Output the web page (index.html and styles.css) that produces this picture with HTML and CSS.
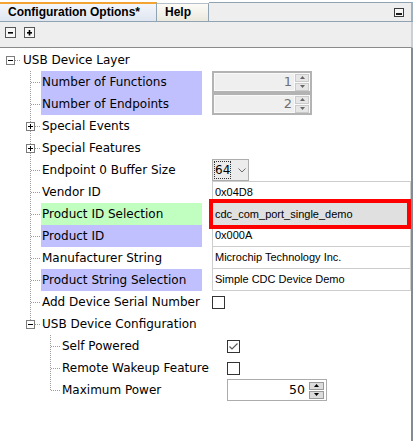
FILE: index.html
```html
<!DOCTYPE html>
<html>
<head>
<meta charset="utf-8">
<link rel="stylesheet" href="styles.css">
</head>
<body>
<div class="panel">
  <div class="tabbar">
    <div class="tab tab-active">Configuration Options*</div>
    <div class="tab tab-help">Help</div>
    <div class="tab-fill">
      <svg class="minbtn" width="10" height="9" viewBox="0 0 10 9"><rect x="0.5" y="0.5" width="9" height="8" fill="#f6f6f6" stroke="#3a3a3a"/><rect x="2" y="5" width="6" height="2" fill="#1e1e1e"/></svg>
    </div>
  </div>
  <div class="toolbar">
    <svg class="tbtn" width="11" height="11" viewBox="0 0 11 11"><rect x="0.5" y="0.5" width="10" height="10" fill="#f7f7f7" stroke="#555"/><rect x="3" y="5" width="5" height="1.6" fill="#000"/></svg>
    <svg class="tbtn" width="11" height="11" viewBox="0 0 11 11"><rect x="0.5" y="0.5" width="10" height="10" fill="#f7f7f7" stroke="#555"/><rect x="3" y="5" width="5" height="1.6" fill="#000"/><rect x="4.7" y="3" width="1.6" height="5.5" fill="#000"/></svg>
  </div>
  <div class="tree">
    <div class="row">
      <div class="g root-g"><svg class="exp" width="9" height="9" viewBox="0 0 9 9"><rect x="0.5" y="0.5" width="8" height="8" fill="#fff" stroke="#7c7c7c"/><rect x="2" y="4" width="5" height="1" fill="#000"/></svg></div>
      <div class="lbl lbl-root">USB Device Layer</div>
    </div>
    <div class="row">
      <div class="g"></div><div class="g tee"></div>
      <div class="lbl hl-blue">Number of Functions</div>
      <div class="val">
        <div class="spin spin-dis"><div class="spin-num">1</div><div class="spin-btns"><div class="sbtn"><svg width="5" height="3" viewBox="0 0 5 3"><path d="M2.5 0L5 3H0z" fill="#666"/></svg></div><div class="sbtn"><svg width="5" height="3" viewBox="0 0 5 3"><path d="M0 0H5L2.5 3z" fill="#666"/></svg></div></div></div>
      </div>
    </div>
    <div class="row">
      <div class="g"></div><div class="g tee"></div>
      <div class="lbl hl-blue">Number of Endpoints</div>
      <div class="val">
        <div class="spin spin-dis"><div class="spin-num">2</div><div class="spin-btns"><div class="sbtn"><svg width="5" height="3" viewBox="0 0 5 3"><path d="M2.5 0L5 3H0z" fill="#666"/></svg></div><div class="sbtn"><svg width="5" height="3" viewBox="0 0 5 3"><path d="M0 0H5L2.5 3z" fill="#666"/></svg></div></div></div>
      </div>
    </div>
    <div class="row">
      <div class="g"></div><div class="g tee"><svg class="exp" width="9" height="9" viewBox="0 0 9 9"><rect x="0.5" y="0.5" width="8" height="8" fill="#fff" stroke="#7c7c7c"/><rect x="2" y="4" width="5" height="1" fill="#000"/><rect x="4" y="2" width="1" height="5" fill="#000"/></svg></div>
      <div class="lbl">Special Events</div>
    </div>
    <div class="row">
      <div class="g"></div><div class="g tee"><svg class="exp" width="9" height="9" viewBox="0 0 9 9"><rect x="0.5" y="0.5" width="8" height="8" fill="#fff" stroke="#7c7c7c"/><rect x="2" y="4" width="5" height="1" fill="#000"/><rect x="4" y="2" width="1" height="5" fill="#000"/></svg></div>
      <div class="lbl">Special Features</div>
    </div>
    <div class="row">
      <div class="g"></div><div class="g tee"></div>
      <div class="lbl">Endpoint 0 Buffer Size</div>
      <div class="val">
        <div class="combo"><span class="combo-txt">64</span><svg class="chev" width="8" height="5" viewBox="0 0 8 5"><path d="M0.5 0.5L4 4L7.5 0.5" fill="none" stroke="#6a6a6a"/></svg></div>
      </div>
    </div>
    <div class="row">
      <div class="g"></div><div class="g tee"></div>
      <div class="lbl">Vendor ID</div>
      <div class="val"><div class="field field-first">0x04D8</div></div>
    </div>
    <div class="row">
      <div class="g"></div><div class="g tee"></div>
      <div class="lbl hl-green">Product ID Selection</div>
      <div class="val"><div class="field field-sel">cdc_com_port_single_demo</div></div>
    </div>
    <div class="row">
      <div class="g"></div><div class="g tee"></div>
      <div class="lbl hl-blue">Product ID</div>
      <div class="val"><div class="field">0x000A</div></div>
    </div>
    <div class="row">
      <div class="g"></div><div class="g tee"></div>
      <div class="lbl">Manufacturer String</div>
      <div class="val"><div class="field">Microchip Technology Inc.</div></div>
    </div>
    <div class="row">
      <div class="g"></div><div class="g tee"></div>
      <div class="lbl hl-blue">Product String Selection</div>
      <div class="val"><div class="field">Simple CDC Device Demo</div></div>
    </div>
    <div class="row">
      <div class="g"></div><div class="g tee"></div>
      <div class="lbl">Add Device Serial Number</div>
      <div class="val"><div class="chk"></div></div>
    </div>
    <div class="row">
      <div class="g"></div><div class="g ell"><svg class="exp" width="9" height="9" viewBox="0 0 9 9"><rect x="0.5" y="0.5" width="8" height="8" fill="#fff" stroke="#7c7c7c"/><rect x="2" y="4" width="5" height="1" fill="#000"/></svg></div>
      <div class="lbl">USB Device Configuration</div>
    </div>
    <div class="row">
      <div class="g"></div><div class="g"></div><div class="g tee"></div>
      <div class="lbl lbl-2">Self Powered</div>
      <div class="val val-2"><div class="chk"><svg width="11" height="11" viewBox="0 0 11 11"><path d="M1.5 5.5L4 8L9.5 2.5" fill="none" stroke="#5a5a5a" stroke-width="1.2"/></svg></div></div>
    </div>
    <div class="row">
      <div class="g"></div><div class="g"></div><div class="g tee"></div>
      <div class="lbl lbl-2">Remote Wakeup Feature</div>
      <div class="val val-2"><div class="chk"></div></div>
    </div>
    <div class="row">
      <div class="g"></div><div class="g"></div><div class="g ell"></div>
      <div class="lbl lbl-2">Maximum Power</div>
      <div class="val val-2">
        <div class="spin spin-on"><div class="spin-num">50</div><div class="spin-btns"><div class="sbtn"><svg width="5" height="3" viewBox="0 0 5 3"><path d="M2.5 0L5 3H0z" fill="#000"/></svg></div><div class="sbtn"><svg width="5" height="3" viewBox="0 0 5 3"><path d="M0 0H5L2.5 3z" fill="#000"/></svg></div></div></div>
      </div>
    </div>
  </div>
</div>
</body>
</html>
```

FILE: styles.css
```css
* { box-sizing: border-box; }
html, body { margin: 0; padding: 0; background: #fff; }
body {
  width: 413px;
  height: 441px;
  overflow: hidden;
  font-family: "DejaVu Sans", sans-serif;
  color: #000;
}
.panel {
  width: 413px;
  height: 441px;
  display: flex;
  flex-direction: column;
}

/* tab bar */
.tabbar {
  height: 22px;
  padding-top: 2px;
  display: flex;
  border-bottom: 1px solid #8fa3b3;
  background: #fff;
}
.tab {
  height: 19px;
  font: bold 12px "Liberation Sans", sans-serif;
  line-height: 16px;
  color: #000;
  white-space: nowrap;
}
.tab-active {
  width: 157px;
  border-top: 2px solid #f4a433;
  border-right: 1px solid #8fa3b3;
  background: linear-gradient(#f3f6fb, #dfe6f1);
  padding-left: 8px;
}
.tab-help {
  width: 52px;
  margin-top: 1px;
  height: 18px;
  border-top: 1px solid #b5c0ca;
  border-right: 1px solid #8fa3b3;
  background: linear-gradient(#fcfbf6, #ebe8de);
  padding-left: 8px;
  line-height: 17px;
}
.tab-fill {
  flex: 1;
  border-top: 1px solid #8fa3b3;
  border-right: 2px solid #9fb0bf;
  background: #eeeeee;
  display: flex;
  justify-content: flex-end;
  align-items: center;
  padding-right: 7px;
}
.minbtn { display: block; }

/* toolbar */
.toolbar {
  height: 26px;
  background: #eeeeee;
  border-bottom: 1px solid #8a8a8a;
  border-right: 2px solid #c9cfd5;
  display: flex;
  align-items: flex-start;
  padding: 5px 0 0 5px;
  gap: 8px;
}
.tbtn { display: block; }

/* tree */
.tree {
  flex: 1;
  padding-top: 1px;
  border-right: 2px solid #838c95;
  background: #fff;
}
.row {
  display: flex;
  height: 22px;
  align-items: flex-start;
}
.g {
  flex: none;
  width: 20px;
  height: 22px;
}
.tee, .ell, .root-g {
  background-repeat: no-repeat;
}
.tee {
  background-image:
    repeating-linear-gradient(to bottom, #9c9c9c 0 1px, transparent 1px 2px),
    repeating-linear-gradient(to right, #9c9c9c 0 1px, transparent 1px 2px);
  background-size: 1px 22px, 9px 1px;
  background-position: 10px 0, 11px 11px;
}
.ell {
  background-image:
    repeating-linear-gradient(to bottom, #9c9c9c 0 1px, transparent 1px 2px),
    repeating-linear-gradient(to right, #9c9c9c 0 1px, transparent 1px 2px);
  background-size: 1px 11px, 9px 1px;
  background-position: 10px 0, 11px 11px;
}
.root-g {
  background-image: repeating-linear-gradient(to right, #9c9c9c 0 1px, transparent 1px 2px);
  background-size: 6px 1px;
  background-position: 15px 11px;
}
.exp {
  display: block;
  margin: 7px 0 0 6px;
}
.lbl {
  flex: none;
  width: 161px;
  height: 22px;
  margin-left: 1px;
  padding-left: 1px;
  font-size: 12px;
  line-height: 22px;
  white-space: nowrap;
}
.lbl-root { margin-left: 2px; width: auto; }
.lbl-2 { width: 166px; }
.hl-blue { background: #c0c0ff; }
.hl-green { background: #c0ffc0; }
.val {
  margin-left: 10px;
  height: 22px;
  display: flex;
  align-items: center;
}
.val-2 { margin-left: 0; }

/* spinner */
.spin {
  width: 100px;
  height: 22px;
  display: flex;
  align-items: center;
}
.spin-dis {
  border: 2px solid #b3b3b3;
  padding: 0 1px 0 1px;
  background: #f9f9f9;
}
.spin-dis .spin-num {
  background: #efefef;
  color: #707070;
  height: 16px;
}
.spin-num {
  flex: 1;
  text-align: right;
  font-size: 13px;
  line-height: 16px;
  padding-right: 2px;
}
.spin-btns {
  width: 14px;
  margin-left: 1px;
  display: flex;
  flex-direction: column;
  gap: 1px;
}
.sbtn {
  height: 8px;
  display: flex;
  align-items: center;
  justify-content: center;
  background: #e6e6e6;
  border: 1px solid #cbcbcb;
}
.sbtn svg { display: block; }
.spin-on {
  border: 1px solid #acacac;
  background: #fff;
  padding: 0 2px 0 0;
}
.spin-on .spin-num { color: #000; padding-right: 3px; font-size: 12.5px; }
.spin-on .spin-btns { width: 15px; }
.spin-on .sbtn {
  background: #dcdcdc;
  border: 1px solid #9a9a9a;
}

/* combo */
.combo {
  width: 37px;
  height: 22px;
  margin-top: 0;
  border: 1px solid #adadad;
  background: #ececec;
  display: flex;
  align-items: center;
  padding-left: 1px;
}
.combo-txt {
  font-size: 12px;
  line-height: 16px;
  height: 18px;
  padding: 0 1px;
  outline: 1px dotted #333;
  outline-offset: -1px;
  display: flex;
  align-items: center;
}
.chev { display: block; margin-left: 7px; }

/* text fields */
.field {
  width: 199px;
  height: 22px;
  border: 1px solid #cdcdcd;
  border-top: none;
  font: 11px "Liberation Sans", sans-serif;
  line-height: 21px;
  padding-left: 2px;
  white-space: nowrap;
  background: #fff;
}
.field-first { border-top: 1px solid #cdcdcd; line-height: 20px; }
.field-sel {
  position: relative;
  z-index: 1;
  width: 194px;
  margin-left: 1px;
  border: none;
  background: #e0e0e0;
  outline: 4px solid #ff0000;
  line-height: 22px;
  padding-left: 2px;
}

/* checkbox */
.chk {
  width: 13px;
  height: 13px;
  border: 1px solid #333;
  background: #fff;
  display: flex;
  align-items: center;
  justify-content: center;
}
.chk svg { display: block; }
```
